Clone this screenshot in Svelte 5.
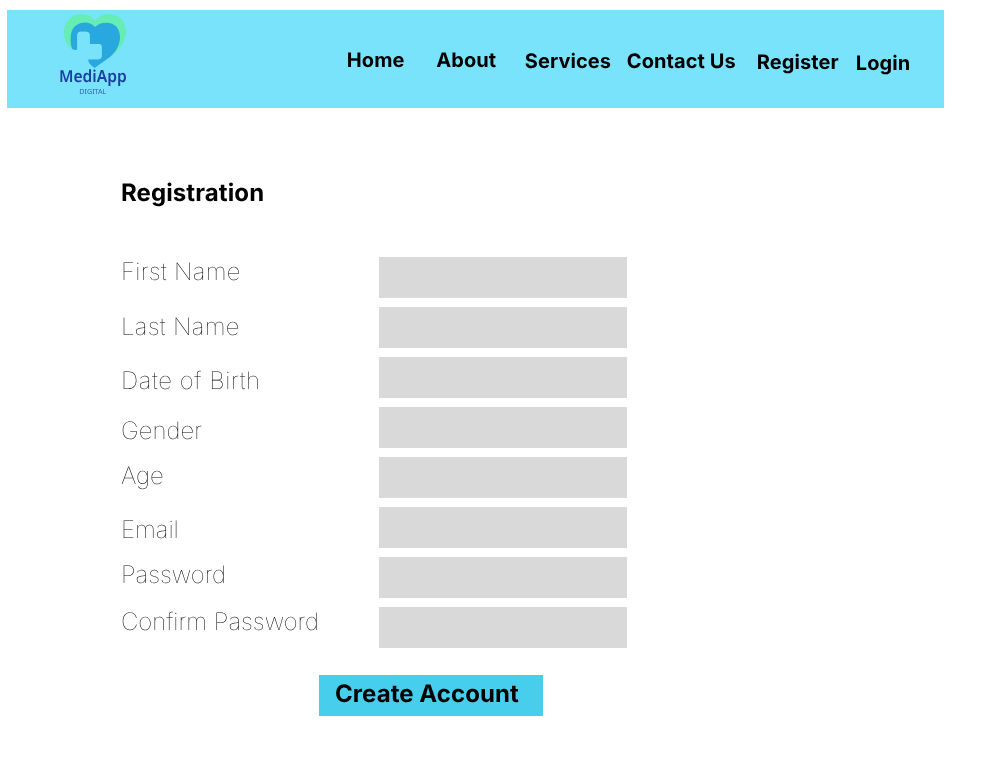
<script>
  const links = [
    { text: 'Home', width: 89.5, drop: 0 },
    { text: 'About', width: 88.5, drop: 0 },
    { text: 'Services', width: 102, drop: 1 },
    { text: 'Contact Us', width: 130, drop: 1 },
    { text: 'Register', width: 99, drop: 2 },
    { text: 'Login', width: 60, drop: 3 }
  ];
  const fields = [
    { text: 'First Name', height: 55, spacing: 0.28 },
    { text: 'Last Name', height: 54, spacing: 0.3 },
    { text: 'Date of Birth', height: 50, spacing: 0.58 },
    { text: 'Gender', height: 45, spacing: 0 },
    { text: 'Age', height: 54, spacing: 0 },
    { text: 'Email', height: 45, spacing: 0 },
    { text: 'Password', height: 47, spacing: 0 },
    { text: 'Confirm Password', height: 29, spacing: 0 }
  ];
</script>

<div class="page">
  <header>
    <svg class="logo" viewBox="0 15 270 294" width="90" height="98" role="img" aria-label="MediApp Digital">
      <path fill="#65edb5" d="M135 48C121 30 105 27 88 28C60 30 42 54 42 83C42 103 50 118 66 134L72 96L100 62L135 74L170 60L202 100L186 152C211 132 227 108 228 80C227 47 207 28 179 28C159 28 146 34 135 48Z" />
      <path fill="#28a8df" d="M135 66C124 55 112 52 101 53C78 54 63 70 62 96C61 112 63 124 67 132Q76 138 82 133V91Q82 80 92 80H108Q119 80 119 91V117H145Q155 117 155 127V151Q155 163 145 163H115C114 174 123 182 134 189C148 177 165 168 180 156C198 141 210 120 210 97C210 69 194 53 169 53C154 53 144 57 135 66Z" />
      <path fill="#79e3fc" d="M82 134V91Q82 80 92 80H108Q119 80 119 91V117H145Q155 117 155 127V151Q155 163 145 163H100Z" />
      <text class="brand" x="27" y="231" textLength="203" lengthAdjust="spacingAndGlyphs">MediApp</text>
      <text class="sub" x="88" y="267" textLength="81" lengthAdjust="spacingAndGlyphs">DIGITAL</text>
    </svg>
    <nav>
      {#each links as link}
        <a href="#top" style="width: {link.width}px; margin-top: {link.drop}px">{link.text}</a>
      {/each}
    </nav>
  </header>
  <main>
    <h1>Registration</h1>
    <form>
      <div class="labels">
        {#each fields as field, i}
          <label for="field{i}" style="height: {field.height}px; letter-spacing: {field.spacing}px">{field.text}</label>
        {/each}
      </div>
      <div class="inputs">
        {#each fields as field, i}
          <input id="field{i}" />
        {/each}
      </div>
    </form>
    <button type="button">Create Account</button>
  </main>
</div>

<style>
  :global(body) { margin: 0; background: #fff; }
  .page {
    box-sizing: border-box;
    width: 986px;
    height: 771px;
    padding: 10px 0 0 7px;
    overflow: hidden;
    font-family: Inter, sans-serif;
    color: #000;
    text-rendering: geometricPrecision;
    will-change: transform;
  }
  header {
    display: flex;
    width: 937px;
    height: 98px;
    background: #79e3fc;
  }
  .logo { flex: none; margin-left: 43px; }
  .brand { font: 600 50px "Noto Sans", sans-serif; fill: #1c3fa3; }
  .sub { font: 400 21px "Noto Sans", sans-serif; fill: #2b62b5; }
  nav { display: flex; align-items: flex-start; margin: 38px 0 0 206.8px; }
  a {
    flex: none;
    font-size: 20px;
    font-weight: 700;
    line-height: 24px;
    letter-spacing: 0.07px;
    color: inherit;
    text-decoration: none;
    white-space: nowrap;
  }
  main { padding: 70px 0 0 114px; }
  h1 { margin: 0; font-size: 24px; font-weight: 700; line-height: 29px; letter-spacing: 0.1px; }
  form { display: flex; margin-top: 50px; }
  .labels { width: 258px; }
  label { display: block; font-size: 24px; font-weight: 100; line-height: 29px; white-space: nowrap; }
  .inputs { display: flex; flex-direction: column; gap: 9px; }
  input {
    box-sizing: border-box;
    width: 248px;
    height: 41px;
    padding: 0 8px;
    border: 0;
    border-radius: 0;
    background: #d9d9d9;
  }
  button {
    display: flex;
    align-items: flex-start;
    width: 224px;
    height: 41px;
    margin: 27px 0 0 198px;
    padding: 4px 0 0 16px;
    border: 0;
    background: #48ceed;
    color: #000;
    font: 700 24px/29px Inter, sans-serif;
    letter-spacing: 0.06px;
    text-rendering: inherit;
    white-space: nowrap;
  }
</style>
